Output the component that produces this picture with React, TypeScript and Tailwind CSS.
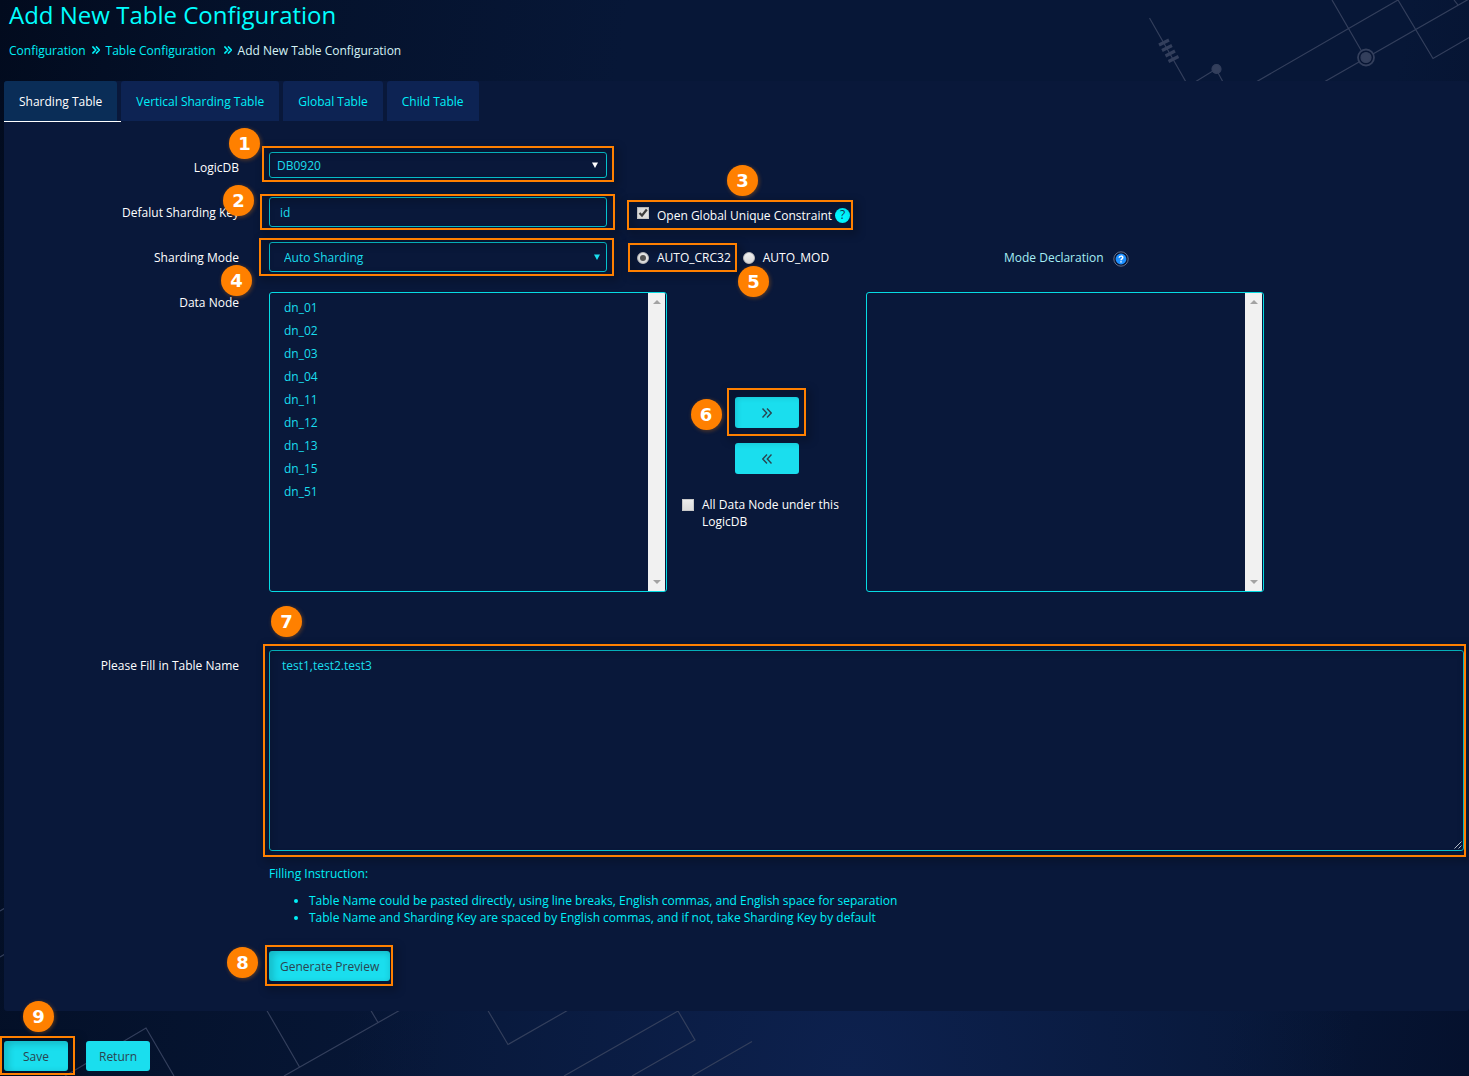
import type { ReactNode } from 'react';

const nodes = ['dn_01', 'dn_02', 'dn_03', 'dn_04', 'dn_11', 'dn_12', 'dn_13', 'dn_15', 'dn_51'];
const tabs = ['Sharding Table', 'Vertical Sharding Table', 'Global Table', 'Child Table'];

/* Orange frame that highlights the control it lies over. */
function Frame({ className }: { className: string }) {
  return (
    <span
      aria-hidden="true"
      className={`pointer-events-none absolute border-2 border-[#ff8000] drop-shadow-[3px_3px_4px_rgba(0,0,0,0.7)] ${className}`}
    />
  );
}

/* Numbered step marker. */
function Step({ n, className }: { n: number; className: string }) {
  return (
    <span
      className={`pointer-events-none absolute z-10 flex size-[31px] items-center justify-center rounded-full bg-[#ff8000] font-['DejaVu_Sans'] text-lg font-bold text-white shadow-[1px_1px_4px_rgba(255,128,0,0.35)] ${className}`}
    >
      {n}
    </span>
  );
}

function Chevrons({ className, flip }: { className: string; flip?: boolean }) {
  return (
    <svg viewBox="0 0 10 10" className={className} fill="none" stroke="currentColor" aria-hidden="true">
      <path d={flip ? 'M5 0.5 L0.8 5 L5 9.5 M9.5 0.5 L5.3 5 L9.5 9.5' : 'M0.5 0.5 L4.7 5 L0.5 9.5 M5 0.5 L9.2 5 L5 9.5'} />
    </svg>
  );
}

function Row({ label, htmlFor, children }: { label: string; htmlFor: string; children: ReactNode }) {
  return (
    <div className="flex gap-[30px]">
      <label htmlFor={htmlFor} className="flex h-8 w-[235px] shrink-0 items-center justify-end">
        {label}
      </label>
      <div className="min-w-0 flex-1">{children}</div>
    </div>
  );
}

function Arrow({ className }: { className: string }) {
  return (
    <svg viewBox="0 0 6 6" className={`pointer-events-none absolute size-1.5 ${className}`} fill="currentColor" aria-hidden="true">
      <path d="M0 0.5 H6 L3 6 Z" />
    </svg>
  );
}

function NodeList({ id, label, items }: { id: string; label: string; items: string[] }) {
  return (
    <div className="flex h-[300px] w-1/3 overflow-hidden rounded-[3px] border border-[#06dbe3]">
      <select
        id={id}
        aria-label={label}
        multiple
        className="h-full min-w-0 flex-1 appearance-none overflow-hidden bg-transparent bg-none py-1.5 text-[#1adeee] outline-none"
      >
        {items.map((n) => (
          <option key={n} className="block h-[23px] px-3.5 py-0 leading-[23px]">
            {n}
          </option>
        ))}
      </select>
      <div aria-hidden="true" className="mr-px flex w-[17px] flex-col items-center justify-between bg-[#f1f1f1] py-[7px] text-[#a3a3a3]">
        <svg viewBox="0 0 8 4" className="h-1 w-2" fill="currentColor">
          <path d="M0 4 L4 0 L8 4 Z" />
        </svg>
        <svg viewBox="0 0 8 4" className="h-1 w-2" fill="currentColor">
          <path d="M0 0 L4 4 L8 0 Z" />
        </svg>
      </div>
    </div>
  );
}

const box = 'block size-3 appearance-none border border-[#c8c8c8] bg-linear-to-b from-[#ececec] to-[#dcdcdc]';
const radio = 'peer block size-3 appearance-none rounded-full border border-[#bdbdbd] bg-linear-to-b from-[#f0f0f0] to-[#d8d8d8]';
const field = 'w-full rounded-[3px] border border-[#06c5d0] bg-transparent text-[#1adeee] outline-none';
const solid = 'rounded-[3px] bg-[#1adeee] text-[#2b4450]';

export default function App() {
  return (
    <div className="relative isolate flex min-h-screen flex-col overflow-hidden bg-[#061533] bg-[radial-gradient(ellipse_at_58%_100%,#0d214e_0%,transparent_42%),linear-gradient(100deg,#020b1e_0%,#04112a_14%,#071737_38%,#071737_85%,#05112d_100%)] font-['Open_Sans',sans-serif] text-xs text-white">
      <svg
        aria-hidden="true"
        viewBox="1149 0 320 82"
        className="absolute top-0 right-0 -z-10 h-[82px] w-80 text-[#333f5c]"
        fill="none"
        stroke="currentColor"
        strokeWidth="1.2"
      >
        <path d="M1149.5 18 L1186 82 M1195 82 L1216 69 L1223 82 M1256 82 L1398 0 M1332 0 L1365 57 M1324 82 L1469 -1 M1398 0 L1433 58.500 L1470 37 M1454 0 L1458 5" />
        <path strokeWidth="3.200" d="M1159 45 L1169 40 M1162 50.500 L1172 45.500 M1165.500 56 L1175 51 M1168.500 61.500 L1178.500 56.500" />
        <circle cx="1216.500" cy="69" r="4.500" fill="currentColor" />
        <circle cx="1366" cy="57.500" r="8" strokeWidth="1.800" fill="#071533" />
        <circle cx="1366" cy="57.500" r="5" fill="currentColor" />
      </svg>
      <svg
        aria-hidden="true"
        viewBox="0 900 760 176"
        className="absolute bottom-0 left-0 -z-10 h-44 w-[760px] text-[#333f5c]"
        fill="none"
        stroke="currentColor"
        strokeWidth="1.200"
      >
        <path d="M0 911 L5 908 M0 957 L5 954 M65 1076 L146 1028 L174 1076 M266 1009 L299.500 1067 M284 1076 L402 1009 M370 1009 L378 1022.500 M487 1009 L508 1044.500 L570 1009 M564 1076 L678 1011 L695 1040 L632 1076 M692 1076 L752 1041.500" />
      </svg>

      <header className="h-[81px] px-[9px]">
        <h1 className="text-2xl leading-[30px] text-[#00ffff]">Add New Table Configuration</h1>
        <nav aria-label="Breadcrumb" className="mt-[11px] flex h-5 items-center">
          <a href="#configuration" className="text-[#00f0f8]">Configuration</a>
          <Chevrons className="mx-1.5 mb-0.5 size-2 stroke-2 text-[#00f0f8]" />
          <a href="#tables" className="text-[#00f0f8]">Table Configuration</a>
          <Chevrons className="mr-1.5 mb-0.5 ml-2 size-2 stroke-2 text-[#00f0f8]" />
          <span className="text-[#d5f3f6]">Add New Table Configuration</span>
        </nav>
      </header>

      <main className="ml-1 rounded-[3px] bg-[#09183a] pb-[30px]">
        <div role="tablist" className="flex">
          {tabs.map((t, i) => (
            <div key={t} className={i === 0 ? 'border-b border-white pr-1' : 'pr-1'}>
              <button
                role="tab"
                aria-selected={i === 0}
                className={`h-10 rounded-t-[3px] px-[15px] pt-0.5 ${i === 0 ? 'bg-[#0a2d57] text-white' : 'bg-[#0d2353] text-[#00f0f8]'}`}
              >
                {t}
              </button>
            </div>
          ))}
        </div>

        <form className="pt-[30px]" onSubmit={(e) => e.preventDefault()}>
          <div className="h-[45px]">
            <Row label="LogicDB" htmlFor="logic-db">
              <div className="relative w-[338px]">
                <select id="logic-db" className={`${field} h-[26px] appearance-none px-[7px] pt-0.5`}>
                  <option>DB0920</option>
                </select>
                <Arrow className="top-2.5 right-[9px] text-white" />
                <Frame className="-top-1.5 -right-[7px] -bottom-1 -left-[7px]" />
                <Step n={1} className="-top-6 -left-10" />
              </div>
            </Row>
          </div>

          <div className="h-[45px]">
            <Row label="Defalut Sharding Key" htmlFor="sharding-key">
              <div className="flex items-start">
                <div className="relative w-[338px]">
                  <input id="sharding-key" defaultValue="id" className={`${field} block h-[30px] px-2.5`} />
                  <Frame className="-top-[3px] -right-2 -bottom-[3px] -left-[9px]" />
                  <Step n={2} className="-top-3 -left-[46px]" />
                </div>
                <div className="relative mt-[3px] ml-5 flex h-[30px] items-center gap-[3px] pr-[3px] pl-2.5">
                  <label className="flex items-center gap-2">
                    <span className="relative mb-1">
                      <input type="checkbox" defaultChecked className={`peer ${box}`} />
                      <svg viewBox="0 0 12 12" className="pointer-events-none absolute top-0 left-0 hidden size-3 peer-checked:block" fill="none" stroke="#3f3f3f" strokeWidth="2.200" aria-hidden="true">
                        <path d="M2.500 6 L5 8.500 L9.800 2.500" />
                      </svg>
                    </span>
                    <span className="pt-0.5">Open Global Unique Constraint</span>
                  </label>
                  <span className="flex size-[15px] items-center justify-center rounded-full bg-[#00f6ff] text-[#123152]">?</span>
                  <Frame className="inset-0" />
                  <Step n={3} className="-top-[35px] left-[100px]" />
                </div>
              </div>
            </Row>
          </div>

          <div className="h-[45px]">
            <Row label="Sharding Mode" htmlFor="sharding-mode">
              <div className="flex items-start">
                <div className="flex w-[735px] shrink-0 items-start">
                  <div className="relative w-[338px]">
                    <select id="sharding-mode" className={`${field} block h-[30px] appearance-none px-3.5 pt-0.5`}>
                      <option>Auto Sharding</option>
                    </select>
                    <Arrow className="top-3 right-[7px] text-[#1adeee]" />
                    <Frame className="-top-1 -right-[7px] -bottom-1 -left-2.5" />
                    <Step n={4} className="top-[23px] -left-12" />
                  </div>
                  <div className="relative ml-[30px] flex h-8 items-center gap-3">
                    <label className="relative flex items-center gap-2">
                      <span className="relative">
                        <input type="radio" name="algorithm" defaultChecked className={radio} />
                        <span className="pointer-events-none absolute top-[3px] left-[3px] hidden size-1.5 rounded-full bg-[#555] peer-checked:block" />
                      </span>
                      AUTO_CRC32
                      <Frame className="-top-[7px] -right-1.5 -bottom-1.5 -left-[9px]" />
                    </label>
                    <label className="flex items-center gap-2">
                      <span className="relative">
                        <input type="radio" name="algorithm" className={radio} />
                        <span className="pointer-events-none absolute top-[3px] left-[3px] hidden size-1.5 rounded-full bg-[#555] peer-checked:block" />
                      </span>
                      AUTO_MOD
                    </label>
                    <Step n={5} className="top-6 left-[101px]" />
                  </div>
                </div>
                <a href="#mode" className="flex h-8 items-center gap-[9px] text-[#a5eef5]">
                  Mode Declaration
                  <svg viewBox="0 0 16 16" className="mt-0.5 size-4" aria-hidden="true">
                    <circle cx="8" cy="8" r="7.200" fill="#0a1430" stroke="#66708a" />
                    <circle cx="8" cy="8" r="5.400" fill="#1e90ff" />
                    <path d="M6.200 6.800 C6.200 4.600 9.800 4.600 9.800 6.600 C9.800 7.800 8 7.800 8 9.200 M8 10.200 V11.500" fill="none" stroke="#fff" strokeWidth="1.500" />
                  </svg>
                </a>
              </div>
            </Row>
          </div>

          <Row label="Data Node" htmlFor="data-node">
            <div className="flex pt-[5px] pr-1.5">
              <NodeList id="data-node" label="Data Node" items={nodes} />
              <div className="flex w-1/6 flex-col items-center pt-[105px]">
                <div className="relative">
                  <button type="button" aria-label="Add selected nodes" className={`${solid} flex h-[31px] w-16 items-center justify-center`}>
                    <Chevrons className="size-2.5 stroke-[1.4]" />
                  </button>
                  <Frame className="-top-[9px] -right-[7px] -bottom-2 -left-2" />
                  <Step n={6} className="top-0.5 -left-11" />
                </div>
                <button type="button" aria-label="Remove selected nodes" className={`${solid} mt-[15px] flex h-[31px] w-16 items-center justify-center`}>
                  <Chevrons className="size-2.5 stroke-[1.4]" flip />
                </button>
                <label className="mt-[22px] flex w-full gap-2 pr-5 pl-[15px] leading-[17px]">
                  <input type="checkbox" className={`${box} mt-[3px] shrink-0`} />
                  All Data Node under this LogicDB
                </label>
              </div>
              <NodeList id="selected-node" label="Selected nodes" items={[]} />
            </div>
          </Row>

          <div className="mt-[58px]">
            <Row label="Please Fill in Table Name" htmlFor="table-names">
              <div className="relative mr-[5px]">
                <textarea
                  id="table-names"
                  defaultValue="test1,test2.test3"
                  className={`${field} block h-[201px] resize-none px-3 py-1.5 leading-[17px]`}
                />
                <svg viewBox="0 0 8 8" className="pointer-events-none absolute right-0.5 bottom-0.5 size-2" stroke="#b9bfca" aria-hidden="true">
                  <path d="M0.500 7.500 L7.500 0.500 M4.500 7.500 L7.500 4.500" />
                </svg>
                <Frame className="-top-1.5 -right-0.5 -bottom-1.5 -left-1.5" />
                <Step n={7} className="-top-11 left-0.5" />
              </div>
              <p className="mt-3.5 leading-[17px] text-[#00f0f8]">Filling Instruction:</p>
              <ul className="mt-2.5 list-disc pl-10 leading-[17px] text-[#00f0f8]">
                <li>Table Name could be pasted directly, using line breaks, English commas, and English space for separation</li>
                <li>Table Name and Sharding Key are spaced by English commas, and if not, take Sharding Key by default</li>
              </ul>
              <div className="relative mt-[25px] w-fit">
                <button type="button" className={`${solid} block h-[30px] px-[11px] pt-0.5`}>Generate Preview</button>
                <Frame className="-top-1.5 -right-[3px] -bottom-[5px] -left-1" />
                <Step n={8} className="-top-1 -left-[42px]" />
              </div>
            </Row>
          </div>
        </form>
      </main>

      <footer className="mt-[30px] flex gap-[18px] pb-[5px] pl-1">
        <div className="relative">
          <button type="button" className={`${solid} block h-[30px] w-16 pt-0.5`}>Save</button>
          <Frame className="-top-[5px] -right-[7px] -bottom-1 -left-1" />
          <Step n={9} className="-top-10 left-[19px]" />
        </div>
        <button type="button" className={`${solid} h-[30px] w-16 pt-0.5`}>Return</button>
      </footer>
    </div>
  );
}
